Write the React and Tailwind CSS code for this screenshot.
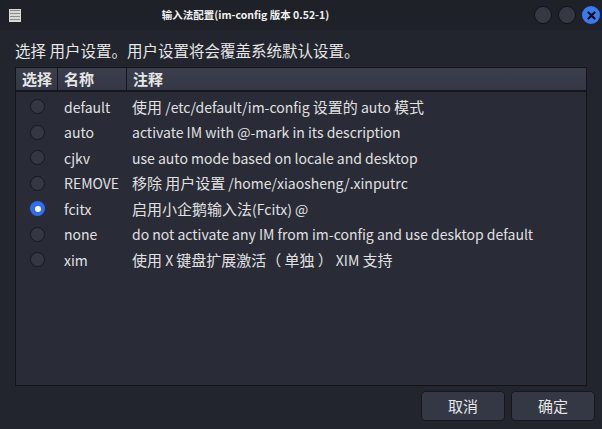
import React from "react";

const rows = [
  { name: "default", desc: "使用 /etc/default/im-config 设置的 auto 模式" },
  { name: "auto", desc: "activate IM with @-mark in its description" },
  { name: "cjkv", desc: "use auto mode based on locale and desktop" },
  { name: "REMOVE", desc: "移除 用户设置 /home/xiaosheng/.xinputrc" },
  { name: "fcitx", desc: "启用小企鹅输入法(Fcitx) @", checked: true },
  { name: "none", desc: "do not activate any IM from im-config and use desktop default" },
  { name: "xim", desc: "使用 X 键盘扩展激活（ 单独 ） XIM 支持" },
];

function Mixed({ text }) {
  const parts = text.split(/([\u3000-\u9fff\uff00-\uffef]+)/);
  return (
    <>
      {parts.map((p, i) =>
        /[\u3000-\u9fff\uff00-\uffef]/.test(p) ? (
          <span key={i} className="text-[15px]">{p}</span>
        ) : (
          <span key={i}>{p}</span>
        )
      )}
    </>
  );
}

function Radio({ checked }) {
  if (checked) {
    return (
      <div className="w-[15px] h-[15px] rounded-full bg-[#2f6ef2] flex items-center justify-center">
        <div className="w-[6px] h-[6px] rounded-full bg-white" />
      </div>
    );
  }
  return <div className="w-[15px] h-[15px] rounded-full bg-[#353843] border border-[#16181e]" />;
}

export default function App() {
  return (
    <div
      className="w-[602px] h-[429px] bg-[#23252e] text-[#e6e6e6] flex flex-col overflow-hidden"
      style={{ fontFamily: '"Noto Sans CJK SC", "Noto Sans", sans-serif' }}
    >
      {/* title bar */}
      <div className="h-[30px] bg-[#1f2129] flex items-center pl-[9px] pr-[2px]">
        <div className="w-[12px] h-[13px] bg-[#d8d8d8] flex flex-col justify-between py-[1px] px-[1px]">
          <div className="h-[1px] bg-[#8a8a8a]" />
          <div className="h-[1px] bg-[#8a8a8a]" />
          <div className="h-[1px] bg-[#8a8a8a]" />
          <div className="h-[1px] bg-[#8a8a8a]" />
        </div>
        <div className="flex-1 text-center text-[10.5px] font-bold text-[#f0f0f0] leading-none pr-[64px]">
          输入法配置(im-config 版本 0.52-1)
        </div>
        <div className="flex items-center gap-[6px]">
          <div className="w-[18px] h-[18px] rounded-full bg-[#363944] border border-[#121318]" />
          <div className="w-[18px] h-[18px] rounded-full bg-[#363944] border border-[#121318]" />
          <div className="w-[18px] h-[18px] rounded-full bg-[#3a7bf0] flex items-center justify-center">
            <svg width="9" height="9" viewBox="0 0 9 9">
              <path d="M1.5 1.5 L7.5 7.5 M7.5 1.5 L1.5 7.5" stroke="#111" strokeWidth="2.2" strokeLinecap="round" />
            </svg>
          </div>
        </div>
      </div>

      <div className="flex-1 flex flex-col px-[15px] pt-[10px] pb-[8px]">
        <div className="text-[15.5px] leading-[20px] text-[#e6e6e6] mb-[7px]">
          选择 用户设置。用户设置将会覆盖系统默认设置。
        </div>

        <div className="flex-1 border border-[#12141a] bg-[#292b37] flex flex-col">
          <div className="h-[24px] flex bg-gradient-to-b from-[#3b3e4b] to-[#343745] border-b-2 border-[#15171d] text-[15px] font-bold">
            <div className="w-[42px] flex items-center pl-[6px] border-r border-[#15171d]">选择</div>
            <div className="w-[69px] flex items-center pl-[6px] border-r border-[#15171d]">名称</div>
            <div className="flex-1 flex items-center pl-[6px]">注释</div>
          </div>
          <div className="flex flex-col pt-[2px]">
            {rows.map((r) => (
              <div key={r.name} className="h-[25.5px] flex items-center text-[14px] leading-[20px]">
                <div className="w-[42px] flex justify-center pl-[1px]">
                  <Radio checked={r.checked} />
                </div>
                <div className="w-[69px] pl-[6px] text-[#e0e0e0]">{r.name}</div>
                <div className="flex-1 pl-[5px] text-[#e0e0e0] whitespace-nowrap">
                  <Mixed text={r.desc} />
                </div>
              </div>
            ))}
          </div>
        </div>

        <div className="flex justify-end gap-[6px] mt-[5px] -mr-[8px]">
          <button className="w-[84px] h-[30px] rounded-[4px] bg-[#343845] border border-[#15171d] text-[15px] text-[#e6e6e6]">
            取消
          </button>
          <button className="w-[84px] h-[30px] rounded-[4px] bg-[#343845] border border-[#15171d] text-[15px] text-[#e6e6e6]">
            确定
          </button>
        </div>
      </div>
    </div>
  );
}
